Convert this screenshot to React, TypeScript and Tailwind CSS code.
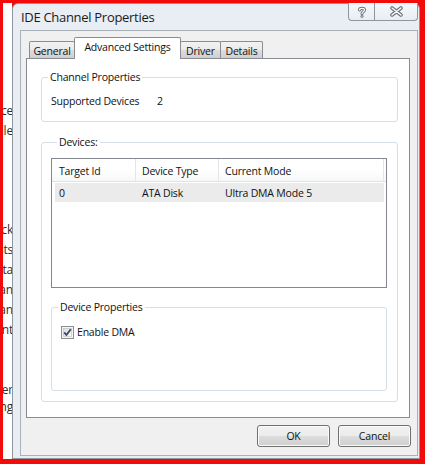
import React from "react";

const BACKDROP = [
  { text: "Device", top: "mt-[101px]" },
  { text: "Controlle", top: "mt-[6px]" },
  { text: "Stack", top: "mt-[85px]" },
  { text: "Hosts", top: "mt-[6px]" },
  { text: "Data", top: "mt-[6px]" },
  { text: "Chan", top: "mt-[6px]" },
  { text: "Chan", top: "mt-[6px]" },
  { text: "Paint", top: "mt-[6px]" },
  { text: "Driver", top: "mt-[46px]" },
  { text: "Setting", top: "mt-[3px]" },
];

function Backdrop() {
  return (
    <div className="w-[9px] shrink-0 bg-white flex flex-col overflow-hidden">
      {BACKDROP.map((b, i) => (
        <div key={i} className={`${b.top} h-[14px] flex justify-end whitespace-nowrap text-[12px] leading-[14px] text-[#2b2b2b] -mr-[1px]`}>
          {b.text}
        </div>
      ))}
    </div>
  );
}

function CaptionButtons() {
  return (
    <div className="ml-auto self-start flex h-[18px] -mt-[1px]">
      <div className="w-[27px] h-full border border-t-0 border-[#8d959e] rounded-bl-[4px] bg-[linear-gradient(to_bottom,#f7f9fb,#e9edf2)] flex items-center justify-center">
        <svg width="10" height="12" viewBox="0 0 10 12">
          <path d="M2.5 4 C2.5 1.8 7.5 1.8 7.5 4 C7.5 5.6 5 5.8 5 7.5" fill="none" stroke="#6b737d" strokeWidth="3" strokeLinecap="round" />
          <path d="M2.5 4 C2.5 1.8 7.5 1.8 7.5 4 C7.5 5.6 5 5.8 5 7.5" fill="none" stroke="#ffffff" strokeWidth="1.2" strokeLinecap="round" />
          <circle cx="5" cy="10.2" r="1.5" fill="#6b737d" />
          <circle cx="5" cy="10.2" r="0.6" fill="#ffffff" />
        </svg>
      </div>
      <div className="w-[44px] h-full -ml-[1px] border border-t-0 border-[#8d959e] rounded-br-[4px] bg-[linear-gradient(to_bottom,#f7f9fb,#e9edf2)] flex items-center justify-center">
        <svg width="13" height="11" viewBox="0 0 13 11">
          <path d="M2 2 L11 9 M11 2 L2 9" stroke="#6b737d" strokeWidth="3.6" strokeLinecap="round" />
          <path d="M2 2 L11 9 M11 2 L2 9" stroke="#ffffff" strokeWidth="1.4" strokeLinecap="round" />
        </svg>
      </div>
    </div>
  );
}

function Tab({ label, width, selected }: { label: string; width: string; selected?: boolean }) {
  return (
    <div
      className={
        selected
          ? `${width} h-[22px] -mb-[1px] -ml-[1px] relative z-10 bg-white border border-b-0 border-[#898c95] rounded-t-[2px] flex justify-center pt-[2px] leading-[14px]`
          : `${width} h-[17px] -ml-[1px] first:ml-0 border border-b-0 border-[#898c95] rounded-t-[2px] bg-[linear-gradient(to_bottom,#f2f2f2,#ebebeb_50%,#dddddd_51%,#cfcfcf)] flex justify-center pt-[2px] leading-[14px]`
      }
    >
      {label}
    </div>
  );
}

function GroupBox({ label, className, children }: { label: string; className?: string; children?: React.ReactNode }) {
  return (
    <div className={`border border-[#d5dfe5] rounded-[3px] ${className ?? ""}`}>
      <div className="-mt-[8px] ml-[6px] px-[2px] w-fit bg-white leading-[14px]">{label}</div>
      {children}
    </div>
  );
}

function Checkbox() {
  return (
    <svg width="13" height="13" viewBox="0 0 13 13" className="shrink-0">
      <defs>
        <linearGradient id="cbg" x1="0" y1="0" x2="1" y2="1">
          <stop offset="0" stopColor="#dcdcdc" />
          <stop offset="1" stopColor="#fbfbfb" />
        </linearGradient>
      </defs>
      <rect x="0.5" y="0.5" width="12" height="12" fill="#f4f4f4" stroke="#8e8f8f" />
      <rect x="2.5" y="2.5" width="8" height="8" fill="url(#cbg)" stroke="#bcbcbc" strokeWidth="0.6" />
      <path d="M3.2 6.4 L5.4 9 L9.8 3.2" fill="none" stroke="#3a4a6c" strokeWidth="1.9" strokeLinejoin="round" />
    </svg>
  );
}

function ListView() {
  return (
    <div className="h-[130px] border border-[#828790] bg-white flex flex-col">
      <div className="h-[23px] flex border-b border-[#e0e2e5] bg-[linear-gradient(to_bottom,#ffffff,#ffffff_50%,#f6f7f8)]">
        <div className="w-[84px] border-r border-[#e3e5e8] pl-[7px] pt-[5px] leading-[14px]">Target Id</div>
        <div className="w-[83px] border-r border-[#e3e5e8] pl-[6px] pt-[5px] leading-[14px]">Device Type</div>
        <div className="w-[165px] border-r border-[#e3e5e8] pl-[6px] pt-[5px] leading-[14px]">Current Mode</div>
      </div>
      <div className="h-[19px] mt-[1px] ml-[3px] mr-[2px] bg-[#ebebeb] flex items-center leading-[14px]">
        <div className="w-[81px] pl-[4px]">0</div>
        <div className="w-[83px] pl-[6px]">ATA Disk</div>
        <div className="pl-[6px]">Ultra DMA Mode 5</div>
      </div>
    </div>
  );
}

function Button({ label }: { label: string }) {
  return (
    <div className="w-[73px] h-[22px] border border-[#707070] rounded-[3px] shadow-[inset_0_0_0_1px_#fbfbfb] bg-[linear-gradient(to_bottom,#f2f2f2,#ebebeb_50%,#dddddd_51%,#cfcfcf)] flex items-center justify-center leading-[14px]">
      {label}
    </div>
  );
}

export default function App() {
  return (
    <div className="w-[425px] h-[464px] bg-[#f20b0b] pt-[3px] pl-[3px] pr-[5px] pb-[5px] flex font-['Open_Sans',sans-serif] text-[10.5px] tracking-[-0.2px] text-[#111]">
      <Backdrop />

      {/* Dialog window */}
      <div className="flex-1 flex flex-col border border-[#8e969f] rounded-t-[6px] bg-[#e9eef4] pl-[7px] pr-[1px] pb-[2px]">
        <div className="h-[26px] flex items-center">
          <span className="text-[13px] tracking-[-0.3px] text-[#1b1b1b] pl-[1px] leading-[16px]">IDE Channel Properties</span>
          <CaptionButtons />
        </div>

        <div className="flex-1 flex flex-col border border-[#a9b1ba] bg-[#f0f0f0] pt-[6px] pl-[5px] pr-[7px] pb-[8px]">
          <div className="h-[21px] flex items-end pl-[3px]">
            <Tab label="General" width="w-[46px]" />
            <Tab label="Advanced Settings" width="w-[107px]" selected />
            <Tab label="Driver" width="w-[41px]" />
            <Tab label="Details" width="w-[43px]" />
          </div>

          <div className="h-[360px] border border-[#898c95] bg-white pl-[14px] pr-[11px] pt-[18px] pb-[15px] flex flex-col">
            <GroupBox label="Channel Properties" className="pb-[13px]">
              <div className="mt-[10px] pl-[9px] flex leading-[14px]">
                <span className="w-[106px]">Supported Devices</span>
                <span>2</span>
              </div>
            </GroupBox>

            <GroupBox label="Devices:" className="mt-[20px] pl-[9px] pr-[10px] pb-[10px]">
              <div className="mt-[9px]">
                <ListView />
              </div>
              <GroupBox label="Device Properties" className="mt-[19px] h-[84px]">
                <div className="mt-[11px] pl-[9px] flex items-center gap-[3px] leading-[14px]">
                  <Checkbox />
                  <span>Enable DMA</span>
                </div>
              </GroupBox>
            </GroupBox>
          </div>

          <div className="mt-[7px] -mr-[1px] flex justify-end gap-[8px]">
            <Button label="OK" />
            <Button label="Cancel" />
          </div>
        </div>
      </div>
    </div>
  );
}
